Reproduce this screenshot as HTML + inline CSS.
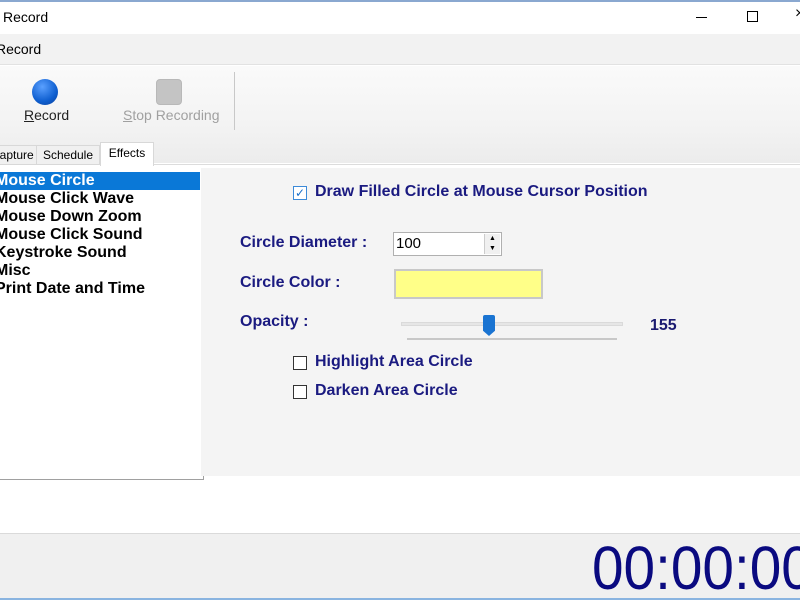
<!DOCTYPE html>
<html><head><meta charset="utf-8"><style>
*{margin:0;padding:0;box-sizing:border-box}
body{width:800px;height:600px;overflow:hidden;background:#fff;font-family:"Liberation Sans",Arial,sans-serif;position:relative}
.abs{position:absolute}
.lbl{color:#1a1a80;font-weight:bold;font-size:16px;position:absolute}
.cb{position:absolute;width:14px;height:14px;border:1px solid #333;background:#fff}
.li{position:absolute;left:-5px;font-weight:bold;font-size:16px;color:#000;height:18px;line-height:18px;width:205px;padding-left:0}
</style></head><body>
<div class="abs" style="left:0;top:0;width:800px;height:2px;background:#8aa8d0"></div>
<div class="abs" style="left:3px;top:9px;font-size:14px;color:#000">Record</div>
<div class="abs" style="left:696px;top:17px;width:11px;height:1px;background:#000"></div>
<div class="abs" style="left:747px;top:11px;width:11px;height:11px;border:1px solid #000"></div>
<div class="abs" style="left:795px;top:5px;font-size:16px;color:#000">×</div>
<div class="abs" style="left:0;top:34px;width:800px;height:31px;background:#f2f2f2;border-bottom:1px solid #e2e2e2"></div>
<div class="abs" style="left:-4px;top:41px;font-size:14px">Record</div>
<div class="abs" style="left:0;top:66px;width:800px;height:97px;background:linear-gradient(#fafafa,#f3f3f3 60%,#ececec)"></div>
<div class="abs" style="left:32px;top:79px;width:26px;height:26px;border-radius:50%;background:radial-gradient(circle at 40% 30%,#5aa0ff,#0f5fd0 60%,#0a3f98)"></div>
<div class="abs" style="left:24px;top:107px;font-size:14px;color:#222"><u>R</u>ecord</div>
<div class="abs" style="left:156px;top:79px;width:26px;height:26px;border-radius:4px;background:#c4c4c4;border:1px solid #b8b8b8"></div>
<div class="abs" style="left:123px;top:107px;font-size:14px;color:#a0a0a0"><u>S</u>top Recording</div>
<div class="abs" style="left:234px;top:72px;width:1px;height:58px;background:#c8c8c8"></div>
<div class="abs" style="left:0;top:164px;width:800px;height:1px;background:#dcdcdc"></div>
<div class="abs" style="left:0;top:145px;width:37px;height:20px;border:1px solid #d8d8d8;border-left:none;font-size:12px;line-height:19px;padding-left:0;background:#f0f0f0;overflow:hidden"><span style="margin-left:-9px">Capture</span></div>
<div class="abs" style="left:37px;top:145px;width:63px;height:20px;border:1px solid #d8d8d8;border-left:none;font-size:12px;line-height:19px;text-align:center;background:#f0f0f0">Schedule</div>
<div class="abs" style="left:100px;top:142px;width:54px;height:24px;border:1px solid #d8d8d8;border-bottom:none;font-size:12px;line-height:20px;text-align:center;background:#fff">Effects</div>
<div class="abs" style="left:0;top:169px;width:204px;height:311px;background:#fff;border-right:1px solid #a0a0a0;border-bottom:1px solid #a0a0a0"></div>
<div class="abs" style="left:0;top:172px;width:200px;height:18px;background:#0a78d7"></div>
<div class="li" style="top:172px;color:#fff">Mouse Circle</div>
<div class="li" style="top:190px">Mouse Click Wave</div>
<div class="li" style="top:208px">Mouse Down Zoom</div>
<div class="li" style="top:226px">Mouse Click Sound</div>
<div class="li" style="top:244px">Keystroke Sound</div>
<div class="li" style="top:262px">Misc</div>
<div class="li" style="top:280px">Print Date and Time</div>
<div class="abs" style="left:201px;top:168px;width:599px;height:308px;background:#f4f4f4"></div>
<div class="cb" style="left:293px;top:186px;border-color:#3c8ad8;color:#1a6fc8;font-size:12px;line-height:12px;text-align:center">✓</div>
<div class="lbl" style="left:315px;top:183px">Draw Filled Circle at Mouse Cursor Position</div>
<div class="lbl" style="left:240px;top:234px">Circle Diameter :</div>
<div class="abs" style="left:393px;top:232px;width:109px;height:24px;background:#fff;border:1px solid #b0b0b0;font-size:15px;padding:2px 2px;color:#000">100</div>
<div class="abs" style="left:484px;top:234px;width:16px;height:20px;background:#f0f0f0;border-left:1px solid #ccc;font-size:7px;line-height:10px;text-align:center">▲<br>▼</div>
<div class="lbl" style="left:240px;top:274px">Circle Color :</div>
<div class="abs" style="left:394px;top:269px;width:149px;height:30px;background:#ffff88;border:2px solid #c8c8c8"></div>
<div class="lbl" style="left:240px;top:313px">Opacity :</div>
<div class="abs" style="left:401px;top:322px;width:222px;height:4px;background:#e6e6e6;border:1px solid #dadada"></div>
<div class="abs" style="left:407px;top:338px;width:210px;height:2px;background:#c8c8c8"></div>
<div class="abs" style="left:483px;top:315px;width:12px;height:21px;background:#1a74d2;clip-path:polygon(0 0,100% 0,100% 75%,50% 100%,0 75%);border-radius:2px"></div>
<div class="lbl" style="left:650px;top:317px;color:#1a1a70">155</div>
<div class="cb" style="left:293px;top:356px"></div>
<div class="lbl" style="left:315px;top:353px">Highlight Area Circle</div>
<div class="cb" style="left:293px;top:385px"></div>
<div class="lbl" style="left:315px;top:382px">Darken Area Circle</div>
<div class="abs" style="left:0;top:533px;width:800px;height:65px;background:#f0f0f0;border-top:1px solid #dadada"></div>
<div class="abs" style="left:592px;top:533px;font-size:61px;line-height:70px;color:#0a0a80;white-space:nowrap;transform:scaleX(0.93);transform-origin:left">00:00:00</div>
<div class="abs" style="left:0;top:598px;width:800px;height:2px;background:#8ab4e0"></div>
</body></html>
